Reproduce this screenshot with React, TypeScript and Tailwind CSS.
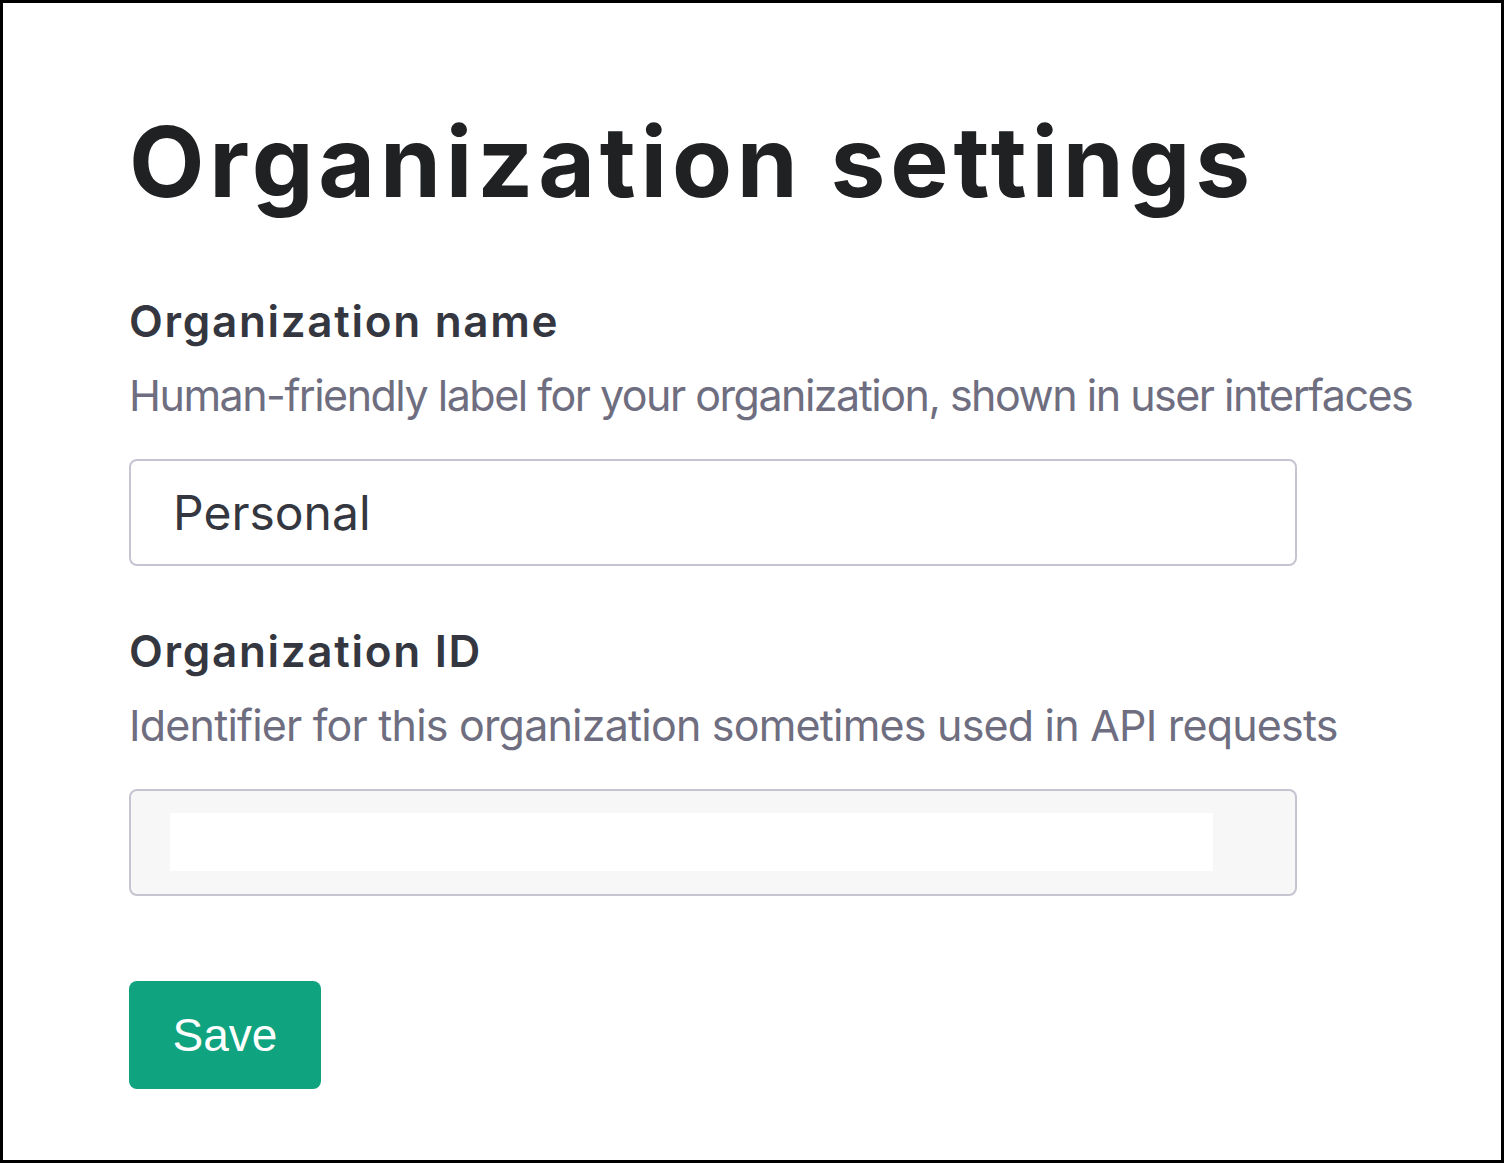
export default function App() {
    return <div className="w-[1504px] h-[1163px] border-[3px] border-black bg-white pl-[126px] pt-[110px]" style={{ fontFamily: "Inter, 'Noto Sans', sans-serif" }}>
        <h1 className="text-[98px] leading-[98px] font-bold text-[#202123] tracking-[4.8px] whitespace-nowrap">Organization settings</h1>

        <Field
            label="Organization name"
            help="Human-friendly label for your organization, shown in user interfaces"
            helpClass="tracking-[-1.5px]"
            className="mt-[84px]"
        >
            <div className="w-[1168px] h-[107px] border-2 border-[#c5c5d2] rounded-lg bg-white flex items-center pl-[42px]">
                <span className="text-[48px] text-[#353740]">Personal</span>
            </div>
        </Field>

        <Field
            label="Organization ID"
            help="Identifier for this organization sometimes used in API requests"
            helpClass="tracking-[-0.8px]"
            className="mt-[59px]"
        >
            <div className="w-[1168px] h-[107px] border-2 border-[#c5c5d2] rounded-lg bg-[#f7f7f8] pl-[39px] pt-[22px]">
                <div className="w-[1043px] h-[58px] bg-white" />
            </div>
        </Field>

        <button className="mt-[85px] w-[192px] h-[108px] rounded-lg bg-[#10a37f] text-white text-[46px] flex items-center justify-center" style={{ fontFamily: "'Liberation Sans', Arial, sans-serif" }}>
            Save
        </button>
    </div>
}

function Field({ label, help, helpClass, className, children }: { label: string, help: string, helpClass: string, className?: string, children: React.ReactNode }) {
    return <div className={className}>
        <div className="text-[44px] leading-[52px] font-semibold text-[#353740] tracking-[1.7px] whitespace-nowrap">{label}</div>
        <div className={"mt-[22px] text-[43px] leading-[52px] text-[#6e6e80] whitespace-nowrap " + helpClass}>{help}</div>
        <div className="mt-[38px]">{children}</div>
    </div>
}
